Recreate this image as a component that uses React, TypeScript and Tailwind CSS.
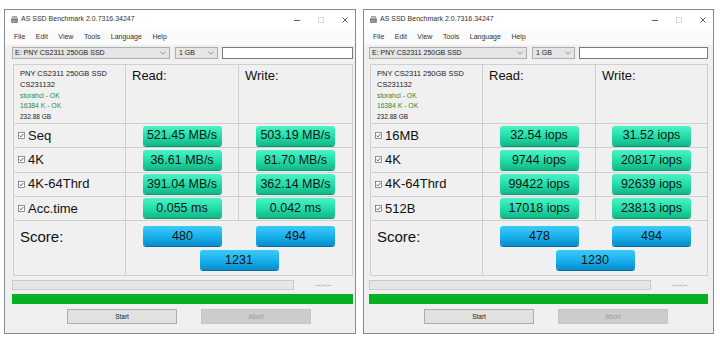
type Row = { label: string; read: string; write: string }

interface WinProps {
  width: string
  pad: string
  rows: Row[]
  score: [string, string, string]
}

function DriveIcon() {
  return (
    <svg width="7" height="7" viewBox="0 0 7 7">
      <path d="M1.5 0.5 H5.5 L6.5 3.5 H0.5 Z" fill="#b8b8b8" stroke="#7a7a7a" strokeWidth="0.6" />
      <rect x="0.5" y="3.5" width="6" height="3" fill="#8c8c8c" stroke="#666" strokeWidth="0.6" />
      <line x1="1.5" y1="5" x2="3.5" y2="5" stroke="#ddd" strokeWidth="0.6" />
    </svg>
  )
}

function Chevron() {
  return (
    <svg width="6" height="4" viewBox="0 0 6 4">
      <path d="M0.5 0.8 L3 3.2 L5.5 0.8" fill="none" stroke="#777" strokeWidth="0.8" />
    </svg>
  )
}

function Check() {
  return (
    <svg width="7" height="7" viewBox="0 0 7 7" className="shrink-0">
      <rect x="0.5" y="0.5" width="6" height="6" fill="#fff" stroke="#666" strokeWidth="0.7" />
      <path d="M1.6 3.6 L2.9 4.9 L5.4 2" fill="none" stroke="#333" strokeWidth="0.8" />
    </svg>
  )
}

function GreenBox({ value }: { value: string }) {
  return (
    <div className="w-[79px] h-[20px] rounded-[3px] bg-linear-to-b from-[#4af2c8] via-[#22dfa9] to-[#13b687] shadow-[0_1px_0_#0e9a70] flex items-center justify-center text-[12.5px] text-[#141414] leading-none">
      {value}
    </div>
  )
}

function BlueBox({ value }: { value: string }) {
  return (
    <div className="w-[79px] h-[20px] rounded-[3px] bg-linear-to-b from-[#3ccbf7] via-[#19b2ec] to-[#0b8ccd] shadow-[0_1px_0_#07709f] flex items-center justify-center text-[12.5px] text-[#141414] leading-none">
      {value}
    </div>
  )
}

function BenchWindow({ width, pad, rows, score }: WinProps) {
  return (
    <div className={`${width} h-[325px] border border-[#8a8a8a] bg-[#f0f0f0] flex flex-col`}>
      {/* Title bar */}
      <div className="h-[19px] bg-white flex items-center pl-[6px] pr-[7px] text-[7px] text-[#333]">
        <DriveIcon />
        <span className="ml-[3px]">AS SSD Benchmark 2.0.7316.34247</span>
        <div className="ml-auto flex items-center gap-[18px]">
          <svg width="6" height="6" viewBox="0 0 6 6">
            <line x1="0" y1="3.5" x2="6" y2="3.5" stroke="#333" strokeWidth="0.8" />
          </svg>
          <svg width="6" height="6" viewBox="0 0 6 6">
            <rect x="0.5" y="0.5" width="5" height="5" fill="none" stroke="#cfcfcf" strokeWidth="0.8" />
          </svg>
          <svg width="6" height="6" viewBox="0 0 6 6">
            <path d="M0.5 0.5 L5.5 5.5 M5.5 0.5 L0.5 5.5" stroke="#333" strokeWidth="0.8" />
          </svg>
        </div>
      </div>

      {/* Menu */}
      <div className="h-[16px] bg-[#fafafa] flex items-center pl-[9px] gap-[10.5px] text-[7px] text-[#333]">
        <span>File</span>
        <span>Edit</span>
        <span>View</span>
        <span>Tools</span>
        <span>Language</span>
        <span>Help</span>
      </div>

      <div className={`flex flex-col ${pad}`}>
        {/* Drive / size selectors */}
        <div className="mt-[2px] h-[12px] flex -ml-px text-[7px] text-[#222]">
          <div className="w-[158px] h-full border border-[#adadad] bg-[#e5e5e5] flex items-center pl-[2px] pr-[3px]">
            <span>E: PNY CS2311 250GB SSD</span>
            <span className="ml-auto"><Chevron /></span>
          </div>
          <div className="ml-[5px] w-[43px] h-full border border-[#adadad] bg-[#e5e5e5] flex items-center pl-[3px] pr-[3px]">
            <span>1 GB</span>
            <span className="ml-auto"><Chevron /></span>
          </div>
          <div className="ml-[4px] flex-1 h-full border border-[#7a7a7a] bg-white" />
        </div>

        {/* Results grid */}
        <div className="mt-[5px] h-[212px] border border-[#d0d0d0] flex flex-col">
          <div className="h-[59px] grid grid-cols-[112px_113px_1fr] border-b border-[#d0d0d0]">
            <div className="pl-[6px] pt-[3px] border-r border-[#d0d0d0] text-[#222]">
              <div className="text-[7.5px] leading-[11px]">PNY CS2311 250GB SSD</div>
              <div className="text-[7.5px] leading-[12px]">CS231132</div>
              <div className="text-[6.8px] leading-[10px] text-[#2e8b2e]">storahci - OK</div>
              <div className="text-[6.8px] leading-[10px] text-[#2e8b2e]">16384 K - OK</div>
              <div className="text-[6.5px] leading-[11px]">232.88 GB</div>
            </div>
            <div className="pl-[6px] pt-[3px] border-r border-[#d0d0d0] text-[13px] leading-[15px] text-[#111]">Read:</div>
            <div className="pl-[6px] pt-[3px] text-[13px] leading-[15px] text-[#111]">Write:</div>
          </div>

          {rows.map((r) => (
            <div key={r.label} className="h-[24.25px] grid grid-cols-[112px_113px_1fr] border-b border-[#d0d0d0]">
              <div className="flex items-center pl-[4px] gap-[3px] border-r border-[#d0d0d0] text-[13px] text-[#111]">
                <Check />
                <span>{r.label}</span>
              </div>
              <div className="flex items-center justify-center border-r border-[#d0d0d0]">
                <GreenBox value={r.read} />
              </div>
              <div className="flex items-center justify-center">
                <GreenBox value={r.write} />
              </div>
            </div>
          ))}

          <div className="flex-1 grid grid-cols-[112px_1fr]">
            <div className="pl-[6px] pt-[7px] border-r border-[#d0d0d0] text-[15px] leading-[17px] text-[#111]">Score:</div>
            <div className="flex flex-col pt-[5px]">
              <div className="grid grid-cols-[113px_1fr]">
                <div className="flex justify-center"><BlueBox value={score[0]} /></div>
                <div className="flex justify-center"><BlueBox value={score[1]} /></div>
              </div>
              <div className="mt-[4px] flex justify-center">
                <BlueBox value={score[2]} />
              </div>
            </div>
          </div>
        </div>

        {/* Progress */}
        <div className="mt-[4px] h-[10px] flex items-center -ml-px">
          <div className="w-[282px] h-full border border-[#c9c9c9] bg-[#e6e6e6]" />
          <div className="flex-1 text-center text-[6px] text-[#555]">--:--:--</div>
        </div>
        <div className="mt-[4px] h-[10px] -ml-px bg-[#06b025]" />

        {/* Buttons */}
        <div className="mt-[5px] h-[15px] flex text-[6.5px]">
          <div className="ml-[54px] w-[110px] h-full border border-[#adadad] bg-[#e1e1e1] flex items-center justify-center text-[#222]">Start</div>
          <div className="ml-[24px] w-[110px] h-full border border-[#c4c4c4] bg-[#cccccc] flex items-center justify-center text-[#9a9a9a]">Abort</div>
        </div>
      </div>
    </div>
  )
}

export default function App() {
  return (
    <div className="w-[720px] h-[344px] bg-white flex items-start pt-[9px] pl-[4px] gap-[7px] font-['Liberation_Sans',Arial,sans-serif]">
      <BenchWindow
        width="w-[352px]"
        pad="pl-[8px] pr-[2px]"
        rows={[
          { label: "Seq", read: "521.45 MB/s", write: "503.19 MB/s" },
          { label: "4K", read: "36.61 MB/s", write: "81.70 MB/s" },
          { label: "4K-64Thrd", read: "391.04 MB/s", write: "362.14 MB/s" },
          { label: "Acc.time", read: "0.055 ms", write: "0.042 ms" },
        ]}
        score={["480", "494", "1231"]}
      />
      <BenchWindow
        width="w-[351px]"
        pad="pl-[6px] pr-[5px]"
        rows={[
          { label: "16MB", read: "32.54 iops", write: "31.52 iops" },
          { label: "4K", read: "9744 iops", write: "20817 iops" },
          { label: "4K-64Thrd", read: "99422 iops", write: "92639 iops" },
          { label: "512B", read: "17018 iops", write: "23813 iops" },
        ]}
        score={["478", "494", "1230"]}
      />
    </div>
  )
}
